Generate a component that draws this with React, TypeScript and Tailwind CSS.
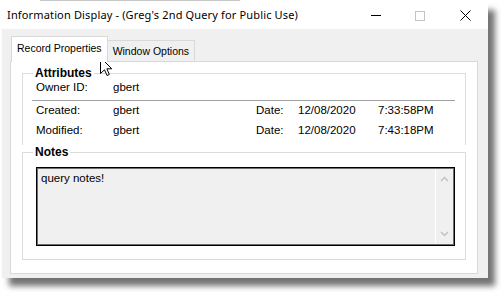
import React from "react";

const body = { fontFamily: '"Liberation Sans", Arial, sans-serif' };
const ui = { fontFamily: '"Noto Sans", "Liberation Sans", sans-serif' };

function Row({ label, value, date, time }: { label: string; value: string; date?: string; time?: string }) {
  return (
    <div className="flex items-center h-[20px] pl-[13px] text-[11.5px] text-black" style={body}>
      <div className="w-[77px]">{label}</div>
      <div className="w-[143px]">{value}</div>
      {date && <div className="w-[42px]">Date:</div>}
      {date && <div className="w-[80px]">{date}</div>}
      {time && <div>{time}</div>}
    </div>
  );
}

export default function App() {
  return (
    <div className="relative w-[501px] h-[292px] bg-white overflow-hidden">
      <div className="h-[1px] ml-[40px] w-[200px] bg-[#c8c8c8]" />
      <div className="ml-[2px] mt-[1px] w-[486px] h-[276px] flex flex-col bg-[#f0f0f0] shadow-[7px_8px_6px_rgba(0,0,0,0.55)]">
        {/* title bar */}
        <div className="h-[27px] bg-white flex items-center shrink-0">
          <div className="pl-[5px] text-[11px] text-black flex-1 tracking-[0.15px]" style={ui}>
            Information Display - (Greg's 2nd Query for Public Use)
          </div>
          <div className="flex items-center h-full">
            <div className="w-[44px] flex justify-center">
              <div className="w-[10px] h-[1px] bg-black" />
            </div>
            <div className="w-[44px] flex justify-center">
              <div className="w-[10px] h-[10px] border border-[#c4c4c4]" />
            </div>
            <div className="w-[46px] flex justify-center">
              <svg width="11" height="11" viewBox="0 0 11 11">
                <path d="M0.5 0.5 L10.5 10.5 M10.5 0.5 L0.5 10.5" stroke="#000" strokeWidth="1" fill="none" />
              </svg>
            </div>
          </div>
        </div>
        {/* body */}
        <div className="flex-1 flex flex-col pl-[8px] pr-[10px] pb-[4px]">
          {/* tabs */}
          <div className="flex items-end h-[33px] text-[10.5px] text-black relative z-10" style={body}>
            <div className="h-[26px] px-[5px] pt-[4px] bg-white border border-b-0 border-[#d9d9d9] ml-[1px]">
              Record Properties
            </div>
            <div className="h-[21px] px-[5px] pt-[3px] bg-[#f0f0f0] border border-b-0 border-l-0 border-[#d9d9d9] mb-[1px]">
              Window Options
            </div>
          </div>
          {/* panel */}
          <div className="flex-1 -mt-[1px] bg-white border border-[#d9d9d9] px-[11px] pt-[4px] pb-[13px] flex flex-col">
            <fieldset className="border border-b-0 border-[#dcdcdc] pb-[4px]">
              <legend className="ml-[10px] px-[2px] text-[12px] font-bold text-black leading-[14px]" style={body}>
                Attributes
              </legend>
              <div className="h-[18px] flex items-center -mt-[1px]">
                <Row label="Owner ID:" value="gbert" />
              </div>
              <div className="h-[1px] bg-[#a0a0a0] ml-[9px] mr-[10px] mt-[3px]" />
              <Row label="Created:" value="gbert" date="12/08/2020" time="7:33:58PM" />
              <Row label="Modified:" value="gbert" date="12/08/2020" time="7:43:18PM" />
            </fieldset>
            <fieldset className="flex-1 border border-[#dcdcdc] flex flex-col">
              <legend className="ml-[10px] px-[2px] text-[12px] font-bold text-black leading-[14px]" style={body}>
                Notes
              </legend>
              <div className="flex-1 ml-[13px] mr-[10px] mt-[8px] mb-[13px] border border-black shadow-[inset_0_0_0_1px_#6e6e6e] bg-[#f0f0f0] flex">
                <div className="flex-1 pl-[4px] pt-[2px] text-[11.5px] text-black" style={body}>
                  query notes!
                </div>
                <div className="w-[18px] my-[1px] mr-[1px] border-l border-white flex flex-col items-center justify-between py-[7px]">
                  <svg width="9" height="6" viewBox="0 0 9 6">
                    <path d="M1 5 L4.5 1.5 L8 5" stroke="#c2c2c2" strokeWidth="1.5" fill="none" />
                  </svg>
                  <svg width="9" height="6" viewBox="0 0 9 6">
                    <path d="M1 1 L4.5 4.5 L8 1" stroke="#c2c2c2" strokeWidth="1.5" fill="none" />
                  </svg>
                </div>
              </div>
            </fieldset>
          </div>
        </div>
      </div>
      {/* mouse cursor */}
      <svg className="absolute left-[100px] top-[57px]" width="13" height="20" viewBox="0 0 13 20">
        <path d="M0.5 0.5 L0.5 16.5 L4.5 12.8 L7 18.5 L9.3 17.5 L6.9 11.8 L11.8 11.8 Z" fill="#fff" stroke="#000" strokeWidth="1" strokeLinejoin="miter" />
      </svg>
    </div>
  );
}
